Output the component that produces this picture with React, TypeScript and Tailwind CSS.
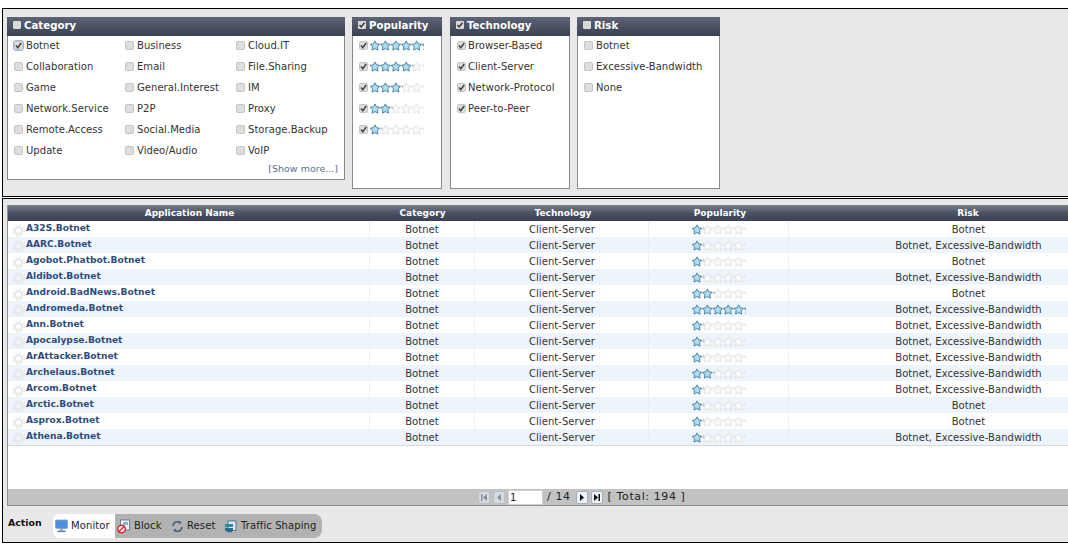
import React from "react";

const FONT = "font-['DejaVu_Sans','Liberation_Sans',sans-serif]";

function Check({ on, focus }: { on?: boolean; focus?: boolean }) {
  return (
    <span className={`relative inline-flex h-[9px] w-[9px] shrink-0 items-center justify-center rounded-[2px] border border-[#c4c4c4] bg-[#dedede] ${focus ? "outline outline-1 outline-[#9db8dc]" : ""}`}>
      {on && (
        <svg width="9" height="9" viewBox="0 0 9 9" className="absolute left-[-1px] top-[-1px]">
          <path d="M2 4.5 L3.8 6.8 L7.2 2" fill="none" stroke="#444" strokeWidth="1.5" />
        </svg>
      )}
    </span>
  );
}

const STAR = "M5 .4 L6.5 3.3 L9.8 3.8 L7.5 6.2 L8 9.6 L5 8.1 L2 9.6 L2.5 6.2 L.2 3.8 L3.5 3.3 Z";

function Stars({ n }: { n: number }) {
  return (
    <svg width="54" height="11" viewBox="0 0 54 11" className="block">
      {[0, 1, 2, 3, 4, 5].map((i) => {
        const on = i < n || (i === n && n === 5);
        return (
          <path
            key={i}
            d={STAR}
            transform={`translate(${i * 10.4} .5)`}
            fill={on ? "#b0dcf0" : "#fafafa"}
            stroke={on ? "#4a86a6" : "#e2e2e2"}
            strokeWidth="1"
          />
        );
      })}
      {n < 5 && <path d={`M${n * 10.4 + 0.5} 4 h1 v2`} fill="none" stroke="#9fb8c6" strokeWidth="1" />}
    </svg>
  );
}

function Head({ label, on, className }: { label: string; on?: boolean; className?: string }) {
  return (
    <div className={`flex h-[19px] items-center gap-[3px] bg-gradient-to-b from-[#5c6475] to-[#3a4152] pb-[2px] pl-[6px] text-[10.2px] font-bold text-white ${className ?? ""}`}>
      <span className="relative mt-[-2px] inline-flex h-[8px] w-[8px] items-center justify-center rounded-[1px] bg-[#d8d8d8]">
        {on && (
          <svg width="8" height="8" viewBox="0 0 8 8">
            <path d="M1.5 4 L3.2 6 L6.5 1.8" fill="none" stroke="#333" strokeWidth="1.4" />
          </svg>
        )}
      </span>
      <span>{label}</span>
    </div>
  );
}

function Item({ label, on, focus, tight }: { label: React.ReactNode; on?: boolean; focus?: boolean; tight?: boolean }) {
  return (
    <div className={`flex h-[21px] items-center text-[10px] tracking-[0.05px] text-[#333] ${tight ? "gap-[2px]" : "gap-[3px]"}`}>
      <Check on={on} focus={focus} />
      <span className="whitespace-nowrap">{label}</span>
    </div>
  );
}

const categories = [
  "Botnet", "Business", "Cloud.IT",
  "Collaboration", "Email", "File.Sharing",
  "Game", "General.Interest", "IM",
  "Network.Service", "P2P", "Proxy",
  "Remote.Access", "Social.Media", "Storage.Backup",
  "Update", "Video/Audio", "VoIP",
];

const BE = "Botnet, Excessive-Bandwidth";
const rows: [string, number, string][] = [
  ["A32S.Botnet", 1, "Botnet"],
  ["AARC.Botnet", 1, BE],
  ["Agobot.Phatbot.Botnet", 1, "Botnet"],
  ["Aldibot.Botnet", 1, BE],
  ["Android.BadNews.Botnet", 2, "Botnet"],
  ["Andromeda.Botnet", 5, BE],
  ["Ann.Botnet", 1, BE],
  ["Apocalypse.Botnet", 1, BE],
  ["ArAttacker.Botnet", 1, BE],
  ["Archelaus.Botnet", 2, BE],
  ["Arcom.Botnet", 1, BE],
  ["Arctic.Botnet", 1, "Botnet"],
  ["Asprox.Botnet", 1, "Botnet"],
  ["Athena.Botnet", 1, BE],
];

const COLS = "grid grid-cols-[361px_105px_174px_140px_360px]";

function Pager({ kind, dim }: { kind: string; dim?: boolean }) {
  const c = dim ? "#8a9098" : "#111";
  return (
    <span className={`flex h-[13px] w-[12px] items-center justify-center rounded-[2px] border ${dim ? "border-[#b8c0c8] bg-[#d6dbe0]" : "border-[#9fb0c0] bg-[#eef2f6]"}`}>
      <svg width="8" height="9" viewBox="0 0 8 9">
        {kind === "first" && <><rect x="1" y="1" width="1.5" height="7" fill={c} /><path d="M7 1 V8 L3 4.5 Z" fill={c} /></>}
        {kind === "prev" && <path d="M6 1 V8 L2 4.5 Z" fill={c} />}
        {kind === "next" && <path d="M2 1 V8 L6 4.5 Z" fill={c} />}
        {kind === "last" && <><rect x="5.5" y="1" width="1.5" height="7" fill={c} /><path d="M1 1 V8 L5 4.5 Z" fill={c} /></>}
      </svg>
    </span>
  );
}

function MonitorIcon() {
  return (
    <svg width="13" height="14" viewBox="0 0 13 14" className="shrink-0">
      <rect x=".5" y="1" width="12" height="8.5" rx="1" fill="#4d8fe0" stroke="#7f9fc4" strokeWidth=".8" />
      <rect x="5" y="9.5" width="3" height="2" fill="#9aa8b8" />
      <rect x="2.5" y="11.5" width="8" height="1.6" fill="#5c7fa8" />
    </svg>
  );
}
function BlockIcon() {
  return (
    <svg width="15" height="15" viewBox="0 0 15 15" className="shrink-0">
      <rect x="4.5" y="1" width="9" height="10" fill="#f4f4f4" stroke="#50708f" strokeWidth=".8" />
      <rect x="7" y="3" width="5" height="3" fill="#8fb0cc" />
      <circle cx="5.5" cy="10" r="3.8" fill="#fff" stroke="#d8262a" strokeWidth="1.5" />
      <path d="M3 12.5 L8 7.5" stroke="#d8262a" strokeWidth="1.5" />
    </svg>
  );
}
function ResetIcon() {
  return (
    <svg width="13" height="13" viewBox="0 0 13 13" className="shrink-0" fill="none">
      <path d="M2 6 A4.5 4.5 0 0 1 9.5 2.8" stroke="#48627e" strokeWidth="1.6" />
      <path d="M11 7 A4.5 4.5 0 0 1 3.5 10.2" stroke="#48627e" strokeWidth="1.6" />
      <path d="M8.5 1 L11 2.8 L8 4.6 Z" fill="#48627e" />
      <path d="M4.5 12 L2 10.2 L5 8.4 Z" fill="#48627e" />
    </svg>
  );
}
function TrafficIcon() {
  return (
    <svg width="13" height="13" viewBox="0 0 13 13" className="shrink-0">
      <rect x="4" y="1" width="8" height="9.5" fill="#dfe8ee" stroke="#33657f" strokeWidth=".8" />
      <rect x="1" y="4" width="8" height="3" fill="#2f8aa6" />
      <rect x="1" y="8" width="8" height="3" fill="#1f6f8a" />
      <rect x="3" y="11" width="5" height="1.2" fill="#33657f" />
    </svg>
  );
}

function GearIcon() {
  return (
    <svg width="13" height="13" viewBox="0 0 13 13" className="shrink-0" fill="none">
      <circle cx="6.5" cy="6.5" r="3.4" stroke="#e6e6e6" strokeWidth="1.8" />
      <circle cx="6.5" cy="6.5" r="5.4" stroke="#e8e8e8" strokeWidth="1.8" strokeDasharray="2.2 2" />
    </svg>
  );
}

export default function App() {
  return (
    <div className={`h-[550px] w-[1068px] overflow-hidden bg-white pt-[8px] ${FONT}`}>
      <div className="ml-[2px] flex h-[189px] w-[1200px] items-start gap-[7px] border border-black bg-[#e8e8e8] pl-[4px] pt-[8px]">
        <div className="h-[163px] w-[338px] border border-t-0 border-[#8a8a8a] bg-white">
          <Head label="Category" className="mx-[-1px]" />
          <div className="mt-[-1px] grid grid-cols-[111px_111px_111px] pl-[6px]">
            {categories.map((c, i) => (
              <Item key={c} label={c} on={i === 0} focus={i === 0} />
            ))}
          </div>
          <div className="pt-[1px] pr-[6px] text-right text-[9.5px] leading-[14px] text-[#5a6f92]">[Show more...]</div>
        </div>
        <div className="h-[172px] w-[90px] border border-t-0 border-[#8a8a8a] bg-white">
          <Head label="Popularity" on className="mx-[-1px]" />
          <div className="mt-[-1px] pl-[6px]">
            {[5, 4, 3, 2, 1].map((n) => (
              <Item key={n} on label={<Stars n={n} />} tight />
            ))}
          </div>
        </div>
        <div className="ml-[1px] h-[172px] w-[120px] border border-t-0 border-[#8a8a8a] bg-white">
          <Head label="Technology" on className="mx-[-1px]" />
          <div className="mt-[-1px] pl-[6px]">
            {["Browser-Based", "Client-Server", "Network-Protocol", "Peer-to-Peer"].map((t) => (
              <Item key={t} on label={t} tight />
            ))}
          </div>
        </div>
        <div className="h-[172px] w-[143px] border border-t-0 border-[#8a8a8a] bg-white">
          <Head label="Risk" className="mx-[-1px]" />
          <div className="mt-[-1px] pl-[6px]">
            {["Botnet", "Excessive-Bandwidth", "None"].map((t) => (
              <Item key={t} label={t} />
            ))}
          </div>
        </div>
      </div>

      <div className="ml-[2px] mt-[1px] h-[345px] w-[1200px] border border-black bg-[#e8e8e8] pl-[4px] pt-[6px]">
        <div className="h-[284px] border-l border-[#8f8f8f] bg-white">
          <div className={`${COLS} h-[16px] items-center bg-gradient-to-b from-[#7a808c] via-[#4b5263] to-[#3a4152] pt-[2px] text-center text-[9px] font-bold text-white`}>
            <span className="pl-[2px]">Application Name</span>
            <span className="pl-[2px]">Category</span>
            <span className="pl-[4px]">Technology</span>
            <span className="pl-[4px]">Popularity</span>
            <span>Risk</span>
          </div>
          {rows.map(([name, stars, risk], i) => (
            <div key={name} className={`${COLS} h-[16px] items-center text-center text-[10px] tracking-[0.05px] text-[#333] ${i % 2 ? "bg-[#edf4fb]" : "bg-white"}`}>
              <div className="flex h-full items-center gap-[1px] pl-[4px] text-left">
                <span className="mt-[3px]"><GearIcon /></span>
                <span className="mt-[-1px] whitespace-nowrap text-[9.1px] font-bold tracking-normal text-[#2f4d7a]">{name}</span>
              </div>
              <div className="flex h-full items-center justify-center border-l border-[#efefef]">Botnet</div>
              <div className="flex h-full items-center justify-center border-l border-[#efefef] pl-[1px]">Client-Server</div>
              <div className="flex h-full items-center border-l border-[#efefef] pl-[43px]"><Stars n={stars} /></div>
              <div className="flex h-full items-center justify-center border-l border-[#efefef]">{risk}</div>
            </div>
          ))}
          <div className="border-t border-[#d8d8d8]" />
        </div>
        <div className="flex h-[17px] w-[1068px] items-center border-l border-b border-[#8f8f8f] bg-[#c2c2c2] pl-[470px] pt-[1px] text-[11px] tracking-[0.6px] text-[#222]">
          <span className="flex items-center gap-[3px]">
            <Pager kind="first" dim />
            <Pager kind="prev" dim />
            <span className="flex h-[15px] w-[35px] items-end border border-[#d0d0d0] bg-white pl-[1px] text-[10px] leading-[12px]">1</span>
          </span>
          <span className="ml-[4px] mr-[5px]">/ 14</span>
          <span className="flex items-center gap-[3px]">
            <Pager kind="next" />
            <Pager kind="last" />
          </span>
          <span className="ml-[5px]">[ Total: 194 ]</span>
        </div>
        <div className="flex items-center pt-[8px]">
          <span className="ml-[1px] mt-[-6px] w-[45px] text-[9.4px] font-bold text-[#111]">Action</span>
          <div className="flex h-[24px] items-stretch text-[10px] tracking-[0.1px] text-[#222]">
            <div className="flex w-[62px] items-center gap-[3px] rounded-l-[6px] bg-white pl-[2px]"><MonitorIcon /><span className="mt-[-2px]">Monitor</span></div>
            <div className="flex w-[53px] items-center gap-[3px] bg-[#b2b2b2] pl-[1px]"><BlockIcon /><span className="mt-[-2px]">Block</span></div>
            <div className="flex w-[53px] items-center gap-[3px] bg-[#b2b2b2] pl-[3px]"><ResetIcon /><span className="mt-[-2px]">Reset</span></div>
            <div className="flex w-[101px] items-center gap-[4px] rounded-r-[8px] bg-[#b2b2b2] pl-[3px]"><TrafficIcon /><span className="mt-[-2px]">Traffic Shaping</span></div>
          </div>
        </div>
      </div>
    </div>
  );
}
